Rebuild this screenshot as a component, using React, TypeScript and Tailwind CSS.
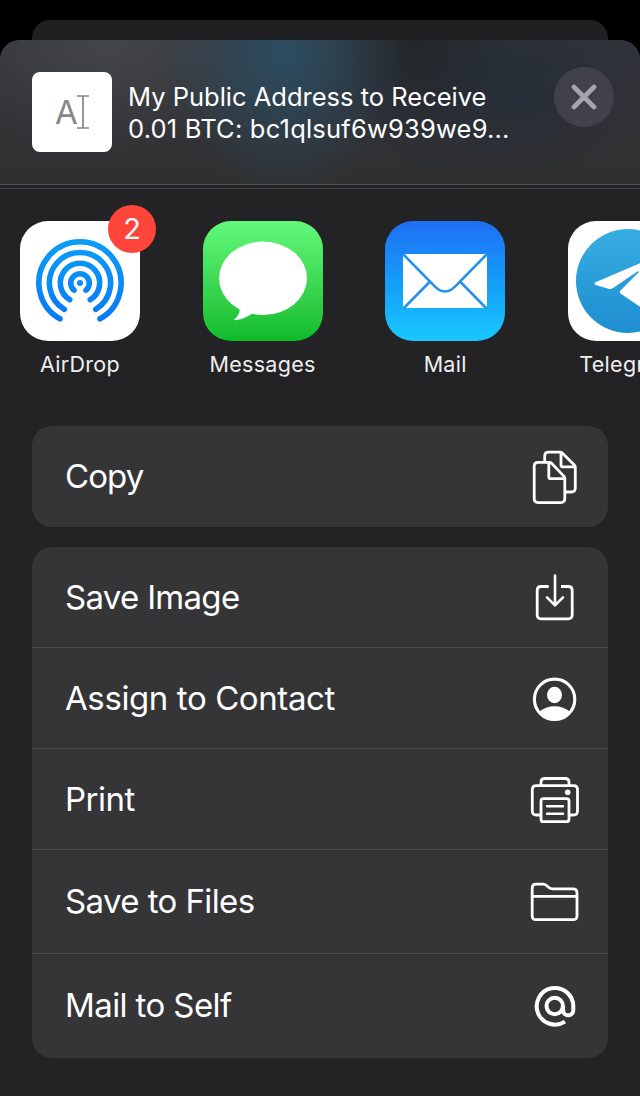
import type { ReactNode } from "react";

function AirDropIcon() {
  return (
    <svg className="size-[120px] rounded-[28px] bg-white" viewBox="0 0 120 120" fill="none">
      <defs>
        <linearGradient id="air" x1="0" y1="18" x2="0" y2="100" gradientUnits="userSpaceOnUse">
          <stop stopColor="#0a9ff8" />
          <stop offset="1" stopColor="#0a78f5" />
        </linearGradient>
      </defs>
      <g stroke="url(#air)" strokeWidth="5.6" strokeLinecap="round">
        <path d="M40 97.8A41.1 41.1 0 1 1 80 97.8" />
        <path d="M44.3 88.3A30.6 30.6 0 1 1 75.7 88.3" />
        <path d="M49.7 78.7A19.7 19.7 0 1 1 70.3 78.7" />
        <path d="M54 69.2A9.3 9.3 0 1 1 66 69.2" />
      </g>
      <circle cx="60" cy="62" r="3" fill="#0a8cf8" />
    </svg>
  );
}

function MessagesIcon() {
  return (
    <svg className="size-[120px] rounded-[28px] bg-linear-to-b from-[#60f97a] to-[#0bbb29]" viewBox="0 0 120 120" fill="#fff">
      <ellipse cx="60" cy="57.3" rx="44" ry="36.7" />
      <path d="M36 84C37.5 90 36.5 94 31.3 98.3C31 99 31.5 99.3 32.3 99.2C39.5 98.8 43.5 95.8 49.5 92.6Z" />
    </svg>
  );
}

function MailIcon() {
  return (
    <svg className="size-[120px] rounded-[28px] bg-linear-to-b from-[#1f6ef3] to-[#1bc8fd]" viewBox="0 0 120 120" fill="none">
      <rect x="18" y="33" width="84" height="54" rx="1.5" fill="#fff" />
      <g stroke="#2692ee" strokeWidth="2.6">
        <path d="M18 33L47.5 63Q60 78 72.5 63L102 33" />
        <path d="M18.5 87.5L45 60.5M101.5 87.5L75 60.5" />
      </g>
    </svg>
  );
}

function TelegramIcon() {
  return (
    <svg className="size-[120px] rounded-[28px] bg-white" viewBox="0 0 120 120" fill="none">
      <defs>
        <linearGradient id="tg" x1="0" y1="8" x2="0" y2="112" gradientUnits="userSpaceOnUse">
          <stop stopColor="#37aee2" />
          <stop offset="1" stopColor="#1e8dd0" />
        </linearGradient>
      </defs>
      <circle cx="60" cy="60" r="52" fill="url(#tg)" />
      <path
        d="M27.5 61.2L86 36.2Q91 34.5 90 40L81 85Q79.5 91 74.5 87.5L52.5 72.5Q51 71 52.5 69.5L71 51Q70.5 49.8 69 50.7L45 67Q43 68.5 40.5 67.8L28 64Q25 62.6 27.5 61.2Z"
        fill="#fff"
      />
    </svg>
  );
}

function Glyph({ children }: { children: ReactNode }) {
  return (
    <svg
      className="h-14 w-14 shrink-0 overflow-visible"
      viewBox="0 0 56 56"
      fill="none"
      stroke="#fff"
      strokeWidth="2.8"
      strokeLinejoin="round"
    >
      {children}
    </svg>
  );
}

const copyGlyph = (
  <Glyph>
    <path d="M22.5 14.3H11.2Q7.2 14.3 7.2 18.3V50.6Q7.2 54.6 11.2 54.6H33.8Q37.8 54.6 37.8 50.6V30.5Q37.8 29.3 37 28.4L24.6 15.2Q23.7 14.3 22.5 14.3Z" />
    <path d="M21.8 14.5V28.7Q21.8 30.7 23.8 30.7H37.6" />
    <path d="M17.7 14V8.2Q17.7 4.2 21.7 4.2H33Q34.5 4.2 35.5 5.2L47.3 17Q48.3 18 48.3 19.5V40Q48.3 44 44.3 44H38.5" />
    <path d="M34 4.4V16.9Q34 18.9 36 18.9H48" />
  </Glyph>
);

const saveGlyph = (
  <Glyph>
    <path d="M21.7 17.5H14.2Q10.2 17.5 10.2 21.5V45.8Q10.2 49.8 14.2 49.8H41.2Q45.2 49.8 45.2 45.8V21.5Q45.2 17.5 41.2 17.5H34" />
    <path strokeWidth="2.6" strokeLinecap="round" d="M28 6.5V36M20 28.4L28 36.3L36 28.4" />
  </Glyph>
);

const contactGlyph = (
  <Glyph>
    <circle cx="27.6" cy="29.3" r="20.2" strokeWidth="3.1" />
    <g stroke="none" fill="#fff">
      <ellipse cx="27.5" cy="25" rx="7.5" ry="8.3" />
      <path d="M12 42Q18.5 36.2 27.6 36.2T43.2 42Q37 50.5 27.6 50.5T12 42Z" />
    </g>
  </Glyph>
);

const printGlyph = (
  <Glyph>
    <path d="M14 44H9.3Q5.3 44 5.3 40V18.6Q5.3 14.6 9.3 14.6H46.5Q50.5 14.6 50.5 18.6V40Q50.5 44 46.5 44H42" />
    <path d="M14 14.600V11.300Q14 7.500 18 7.500H38Q42 7.500 42 11.300V14.600" />
    <rect x="14" y="27.600" width="28" height="23.100" rx="2.500" />
    <path strokeWidth="2.400" strokeLinecap="round" d="M20 35.200H36M20 42.700H36" />
    <circle cx="40.700" cy="21.300" r="2.800" fill="#fff" stroke="none" />
  </Glyph>
);

const folderGlyph = (
  <Glyph>
    <path d="M9.200 10.200H16Q18 10.200 19.500 11.500L21.500 13.200Q23.300 14.800 25.500 14.800H46Q50 14.800 50 18.800V41.700Q50 45.700 46 45.700H9.200Q5.200 45.700 5.200 41.700V14.200Q5.200 10.200 9.200 10.200Z" />
    <path d="M5.200 22.300H50" />
  </Glyph>
);

const atGlyph = (
  <Glyph>
    <g strokeWidth="4">
      <circle cx="27.700" cy="28" r="8.200" />
      <path d="M36.100 28V32.200A5.100 5.100 0 0 0 46.300 32.200V28.200A18.300 18.300 0 1 0 38 43.600" />
    </g>
  </Glyph>
);

function AppItem({ label, badge, children }: { label: string; badge?: string; children: ReactNode }) {
  return (
    <div className="relative flex w-[120px] shrink-0 flex-col items-center">
      {children}
      {badge && (
        <span className="absolute -top-4 -right-4 flex size-12 items-center justify-center rounded-full bg-[#ff453a] text-[29px]">
          {badge}
        </span>
      )}
      <span className="mt-[9px] text-[21.500px] leading-7 tracking-[0.300px] text-[#efeff0]">{label}</span>
    </div>
  );
}

function Row({ label, icon, className }: { label: string; icon: ReactNode; className: string }) {
  return (
    <div className={`flex items-start justify-between border-[#4b4b4d] pr-[25px] pl-8 text-[33px] ${className}`}>
      <span className="mt-[6px] ml-px leading-[44px] text-white">{label}</span>
      {icon}
    </div>
  );
}

export default function App() {
  return (
    <div className="h-[1096px] w-[640px] overflow-hidden bg-black pt-5 font-['Inter','Liberation_Sans',sans-serif] text-white">
      <div className="mx-8 h-5 rounded-t-[18px] bg-[#202022]" />
      <main className="h-[1056px] overflow-hidden rounded-t-[20px] bg-[#232325]">
        <header className="flex h-[145px] border-b border-[#505052] bg-[radial-gradient(ellipse_120px_140px_at_285px_12px,#2c4d62_0%,#2c4d6200_100%),radial-gradient(ellipse_100px_90px_at_410px_5px,#24272a_0%,#24272a00_100%),radial-gradient(ellipse_180px_100px_at_490px_40px,#252d38_0%,#252d3800_100%),radial-gradient(ellipse_190px_120px_at_110px_0px,#444649_0%,#44464900_100%),linear-gradient(#323339,#303031)]">
          <div className="mt-8 ml-8 flex size-20 shrink-0 items-center justify-center rounded-lg bg-white">
            <span className="-mr-px text-[33px] leading-10 text-[#868686]">A</span>
            <svg className="h-[34px] w-3" viewBox="0 0 12 34" fill="none" stroke="#858585" strokeWidth="1.700">
              <path d="M0 1H12M0 33H12M6 1V33" />
            </svg>
          </div>
          <p className="mt-[41px] ml-4 w-[426px] text-[25.500px] leading-8 whitespace-nowrap">
            My Public Address to Receive
            <br />
            <span className="tracking-[0.200px]">0.01 BTC: bc1qlsuf6w939we9...</span>
          </p>
          <button aria-label="Close" className="mt-[27px] flex size-[60px] shrink-0 items-center justify-center rounded-full bg-[#414249]">
            <svg className="size-[26px]" viewBox="0 0 26 26" fill="none" stroke="#a5a6ad" strokeWidth="4.600" strokeLinecap="round">
              <path d="M3 3L23 23M23 3L3 23" />
            </svg>
          </button>
        </header>
        <div className="h-1 border-b border-[#464648]" />
        <section className="flex h-[237px] gap-[62.600px] overflow-hidden pt-8 pl-5">
          <AppItem label="AirDrop" badge="2">
            <AirDropIcon />
          </AppItem>
          <AppItem label="Messages">
            <MessagesIcon />
          </AppItem>
          <AppItem label="Mail">
            <MailIcon />
          </AppItem>
          <AppItem label="Telegram">
            <TelegramIcon />
          </AppItem>
        </section>
        <div className="mx-8 rounded-[20px] bg-[#353537]">
          <Row label="Copy" icon={copyGlyph} className="h-[101px] pt-[22px] tracking-[-0.900px]" />
        </div>
        <div className="mx-8 mt-5 rounded-[20px] bg-[#353537]">
          <Row label="Save Image" icon={saveGlyph} className="h-[101px] border-b pt-[22px] tracking-[-0.700px]" />
          <Row label="Assign to Contact" icon={contactGlyph} className="h-[101px] border-b pt-[22px] tracking-[-0.400px]" />
          <Row label="Print" icon={printGlyph} className="h-[101px] border-b pt-[22px] tracking-[-0.500px]" />
          <Row label="Save to Files" icon={folderGlyph} className="h-[104px] border-b pt-6 tracking-[-0.600px] [&>span]:mt-[5px]" />
          <Row label="Mail to Self" icon={atGlyph} className="h-[104px] pt-6 tracking-[-0.600px] [&>span]:mt-[5px]" />
        </div>
      </main>
    </div>
  );
}
